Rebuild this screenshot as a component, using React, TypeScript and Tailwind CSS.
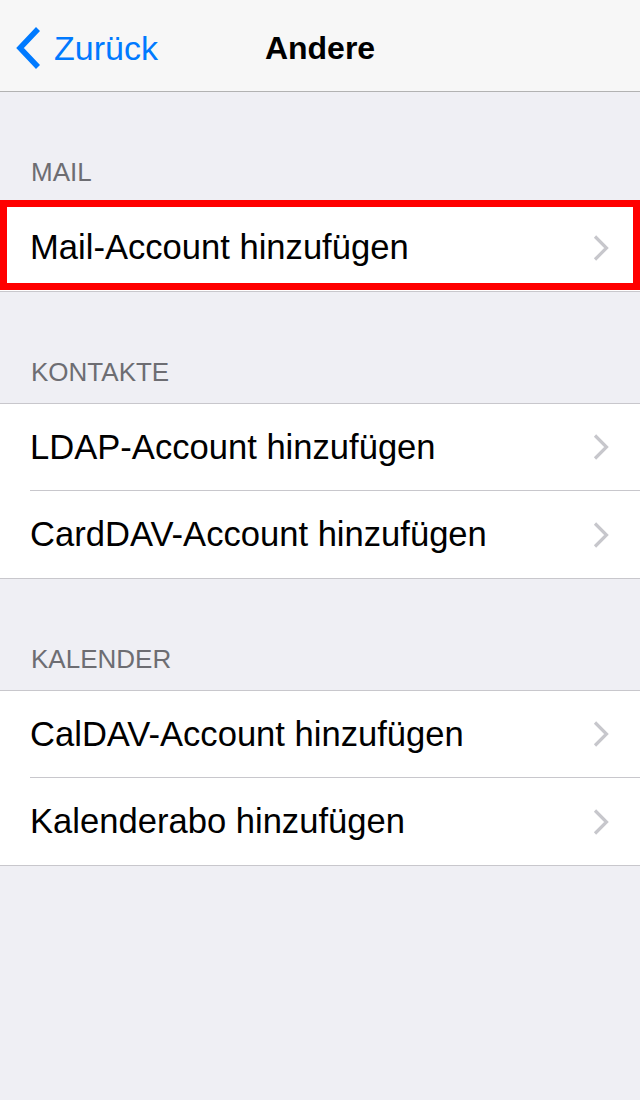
type Section = {
  title: string;
  rows: string[];
  highlight?: boolean;
};

const sections: Section[] = [
  { title: "MAIL", rows: ["Mail-Account hinzufügen"], highlight: true },
  { title: "KONTAKTE", rows: ["LDAP-Account hinzufügen", "CardDAV-Account hinzufügen"] },
  { title: "KALENDER", rows: ["CalDAV-Account hinzufügen", "Kalenderabo hinzufügen"] },
];

function Chevron() {
  return (
    <svg width="16" height="26" viewBox="0 0 16 26" fill="none" className="shrink-0">
      <path d="M2 1.5 L13.5 13 L2 24.5" stroke="#c7c7cc" strokeWidth="3.2" />
    </svg>
  );
}

function Row({ label, last }: { label: string; last: boolean }) {
  return (
    <div className="pl-[30px]">
      <div
        className={`flex h-[87px] items-center justify-between pr-[31px] ${
          last ? "" : "border-b border-[#c8c7cc]"
        }`}
      >
        <span className="text-[34.6px] leading-none text-black">{label}</span>
        <Chevron />
      </div>
    </div>
  );
}

export default function App() {
  return (
    <div
      className="min-h-[1100px] bg-[#efeff4]"
      style={{ fontFamily: '"Liberation Sans", Arial, sans-serif' }}
    >
      <header className="relative flex h-[92px] items-center border-b border-[#b2b2b2] bg-[#f7f7f7] pt-[4px]">
        <div className="flex items-center pl-[14px] text-[#007aff]">
          <svg width="30" height="44" viewBox="0 0 30 44" fill="none">
            <path d="M24 3 L6 22 L24 41" stroke="#007aff" strokeWidth="5.5" />
          </svg>
          <span className="ml-[10px] text-[34px] leading-none">Zurück</span>
        </div>
        <h1 className="absolute left-1/2 -translate-x-1/2 text-[32px] font-semibold leading-none text-black">
          Andere
        </h1>
      </header>

      {sections.map((s) => (
        <section key={s.title} className="mt-[64px]">
          <div className="px-[31px] pb-[15px] text-[26px] leading-[32px] text-[#6d6d72]">{s.title}</div>
          <div className="relative border-y border-[#c8c7cc] bg-white">
            {s.rows.map((r, i) => (
              <Row key={r} label={r} last={i === s.rows.length - 1} />
            ))}
            {s.highlight && (
              <div className="pointer-events-none absolute inset-x-0 top-[-4px] h-[90px] border-[7px] border-[#ff0000]" />
            )}
          </div>
        </section>
      ))}
    </div>
  );
}
